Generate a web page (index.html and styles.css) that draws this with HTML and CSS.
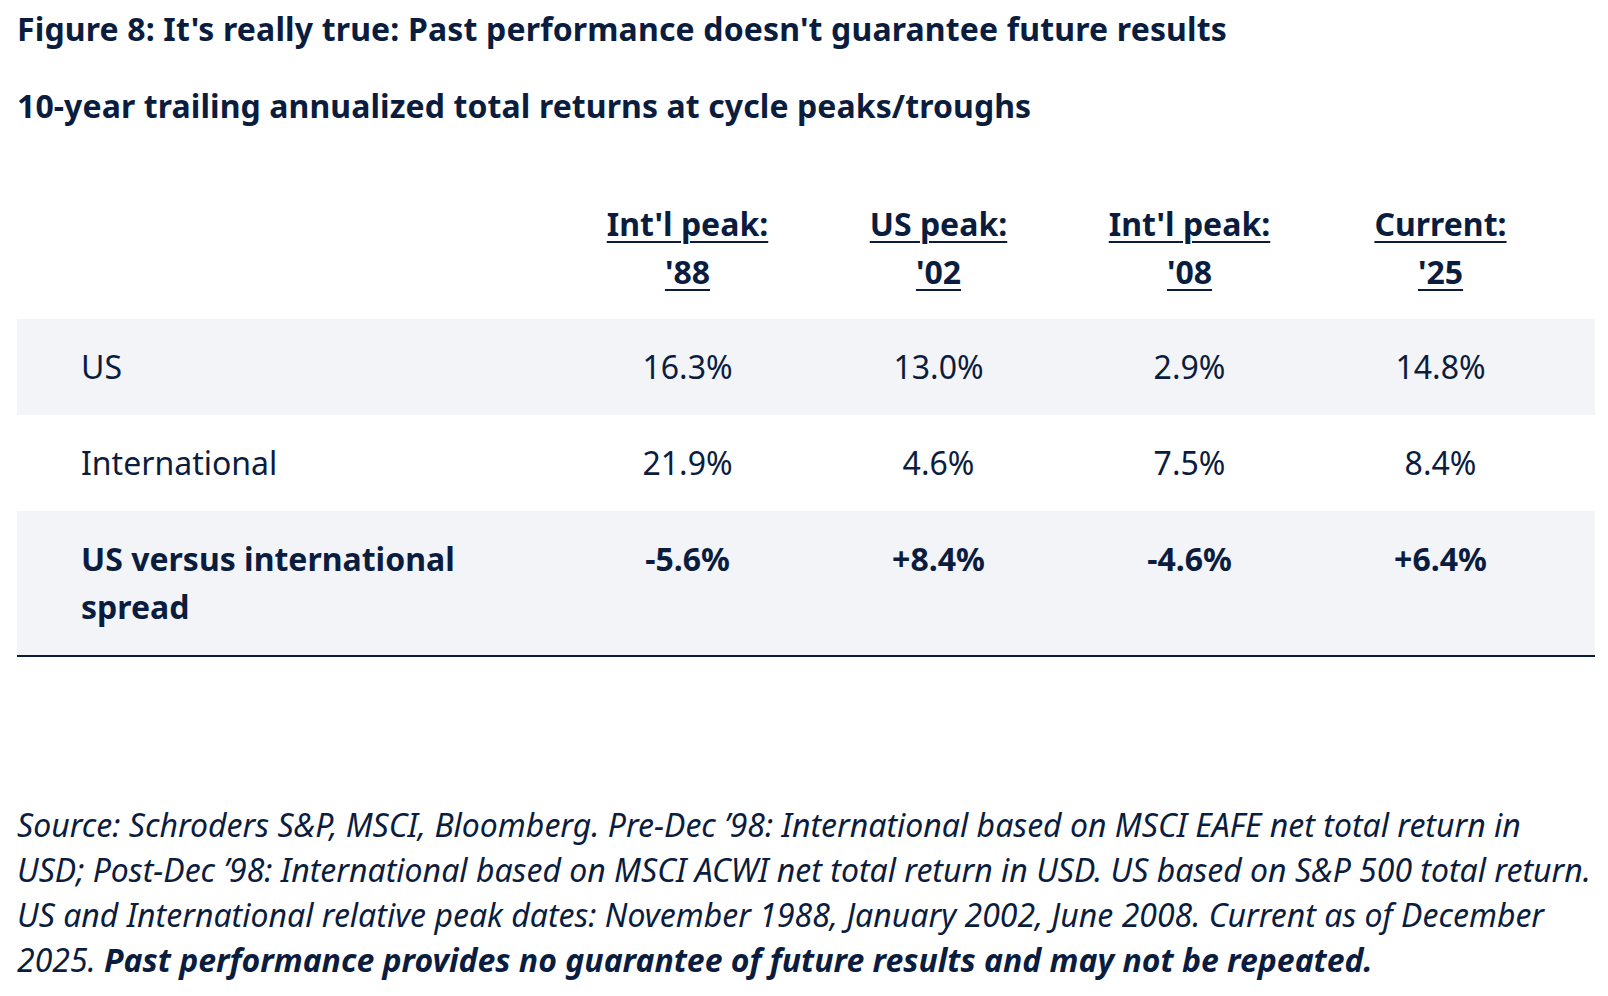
FILE: index.html
```html
<!DOCTYPE html>
<html lang="en">
<head>
<meta charset="utf-8">
<title>Figure 8</title>
<link rel="stylesheet" href="styles.css">
</head>
<body>
<main class="figure">
  <h1 class="title">Figure 8: It's really true: Past performance doesn't guarantee future results</h1>
  <h2 class="subtitle">10-year trailing annualized total returns at cycle peaks/troughs</h2>
  <div class="table">
    <div class="row head">
      <div class="cell label"></div>
      <div class="cell num"><span class="u">Int'l peak: '88</span></div>
      <div class="cell num"><span class="u">US peak: '02</span></div>
      <div class="cell num"><span class="u">Int'l peak: '08</span></div>
      <div class="cell num"><span class="u">Current: '25</span></div>
    </div>
    <div class="row shade">
      <div class="cell label">US</div>
      <div class="cell num">16.3%</div>
      <div class="cell num">13.0%</div>
      <div class="cell num">2.9%</div>
      <div class="cell num">14.8%</div>
    </div>
    <div class="row">
      <div class="cell label">International</div>
      <div class="cell num">21.9%</div>
      <div class="cell num">4.6%</div>
      <div class="cell num">7.5%</div>
      <div class="cell num">8.4%</div>
    </div>
    <div class="row shade total">
      <div class="cell label">US versus international spread</div>
      <div class="cell num">-5.6%</div>
      <div class="cell num">+8.4%</div>
      <div class="cell num">-4.6%</div>
      <div class="cell num">+6.4%</div>
    </div>
  </div>
  <p class="note">Source: Schroders S&amp;P, MSCI, Bloomberg. Pre-Dec ’98: International based on MSCI EAFE net total return in USD; Post-Dec ’98: International based on MSCI ACWI net total return in USD. US based on S&amp;P 500 total return. US and International relative peak dates: November 1988, January 2002, June 2008. Current as of December 2025. <strong>Past performance provides no guarantee of future results and may not be repeated.</strong></p>
</main>
</body>
</html>
```

FILE: styles.css
```css
html, body {
  margin: 0;
  padding: 0;
  background: #ffffff;
}

body {
  font-family: "Noto Sans", "Open Sans", sans-serif;
  color: #0b1d3f;
  font-size: 32px;
  line-height: 48px;
}

.figure {
  padding: 5px 13px 0 17px;
}

.title {
  margin: 0;
  font-size: 32px;
  line-height: 48px;
  font-weight: 700;
  letter-spacing: 0.15px;
}

.subtitle {
  margin: 29px 0 0;
  font-size: 32px;
  line-height: 48px;
  font-weight: 700;
  letter-spacing: 0.09px;
}

.table {
  margin-top: 70px;
  border-bottom: 2px solid #0b1d3f;
}

.row {
  display: grid;
  grid-template-columns: 1fr repeat(4, 251px);
  padding-right: 29px;
}

.row.shade {
  background: #f3f4f8;
}

.cell {
  padding: 24px 0;
}

.head .cell {
  padding: 0 0 23px;
  font-weight: 700;
}

.label {
  padding-left: 64px !important;
  padding-right: 90px !important;
}

.num {
  text-align: center;
  padding-left: 40px;
  padding-right: 40px;
}

.head .num {
  padding-left: 40px;
  padding-right: 40px;
}

.u {
  text-decoration: underline;
  text-decoration-thickness: 2px;
  text-underline-offset: 5px;
}

.total .cell {
  font-weight: 700;
}

.note {
  margin: 145px 0 0;
  font-style: italic;
  font-size: 32px;
  line-height: 45px;
}

.note strong {
  font-weight: 700;
}
```
